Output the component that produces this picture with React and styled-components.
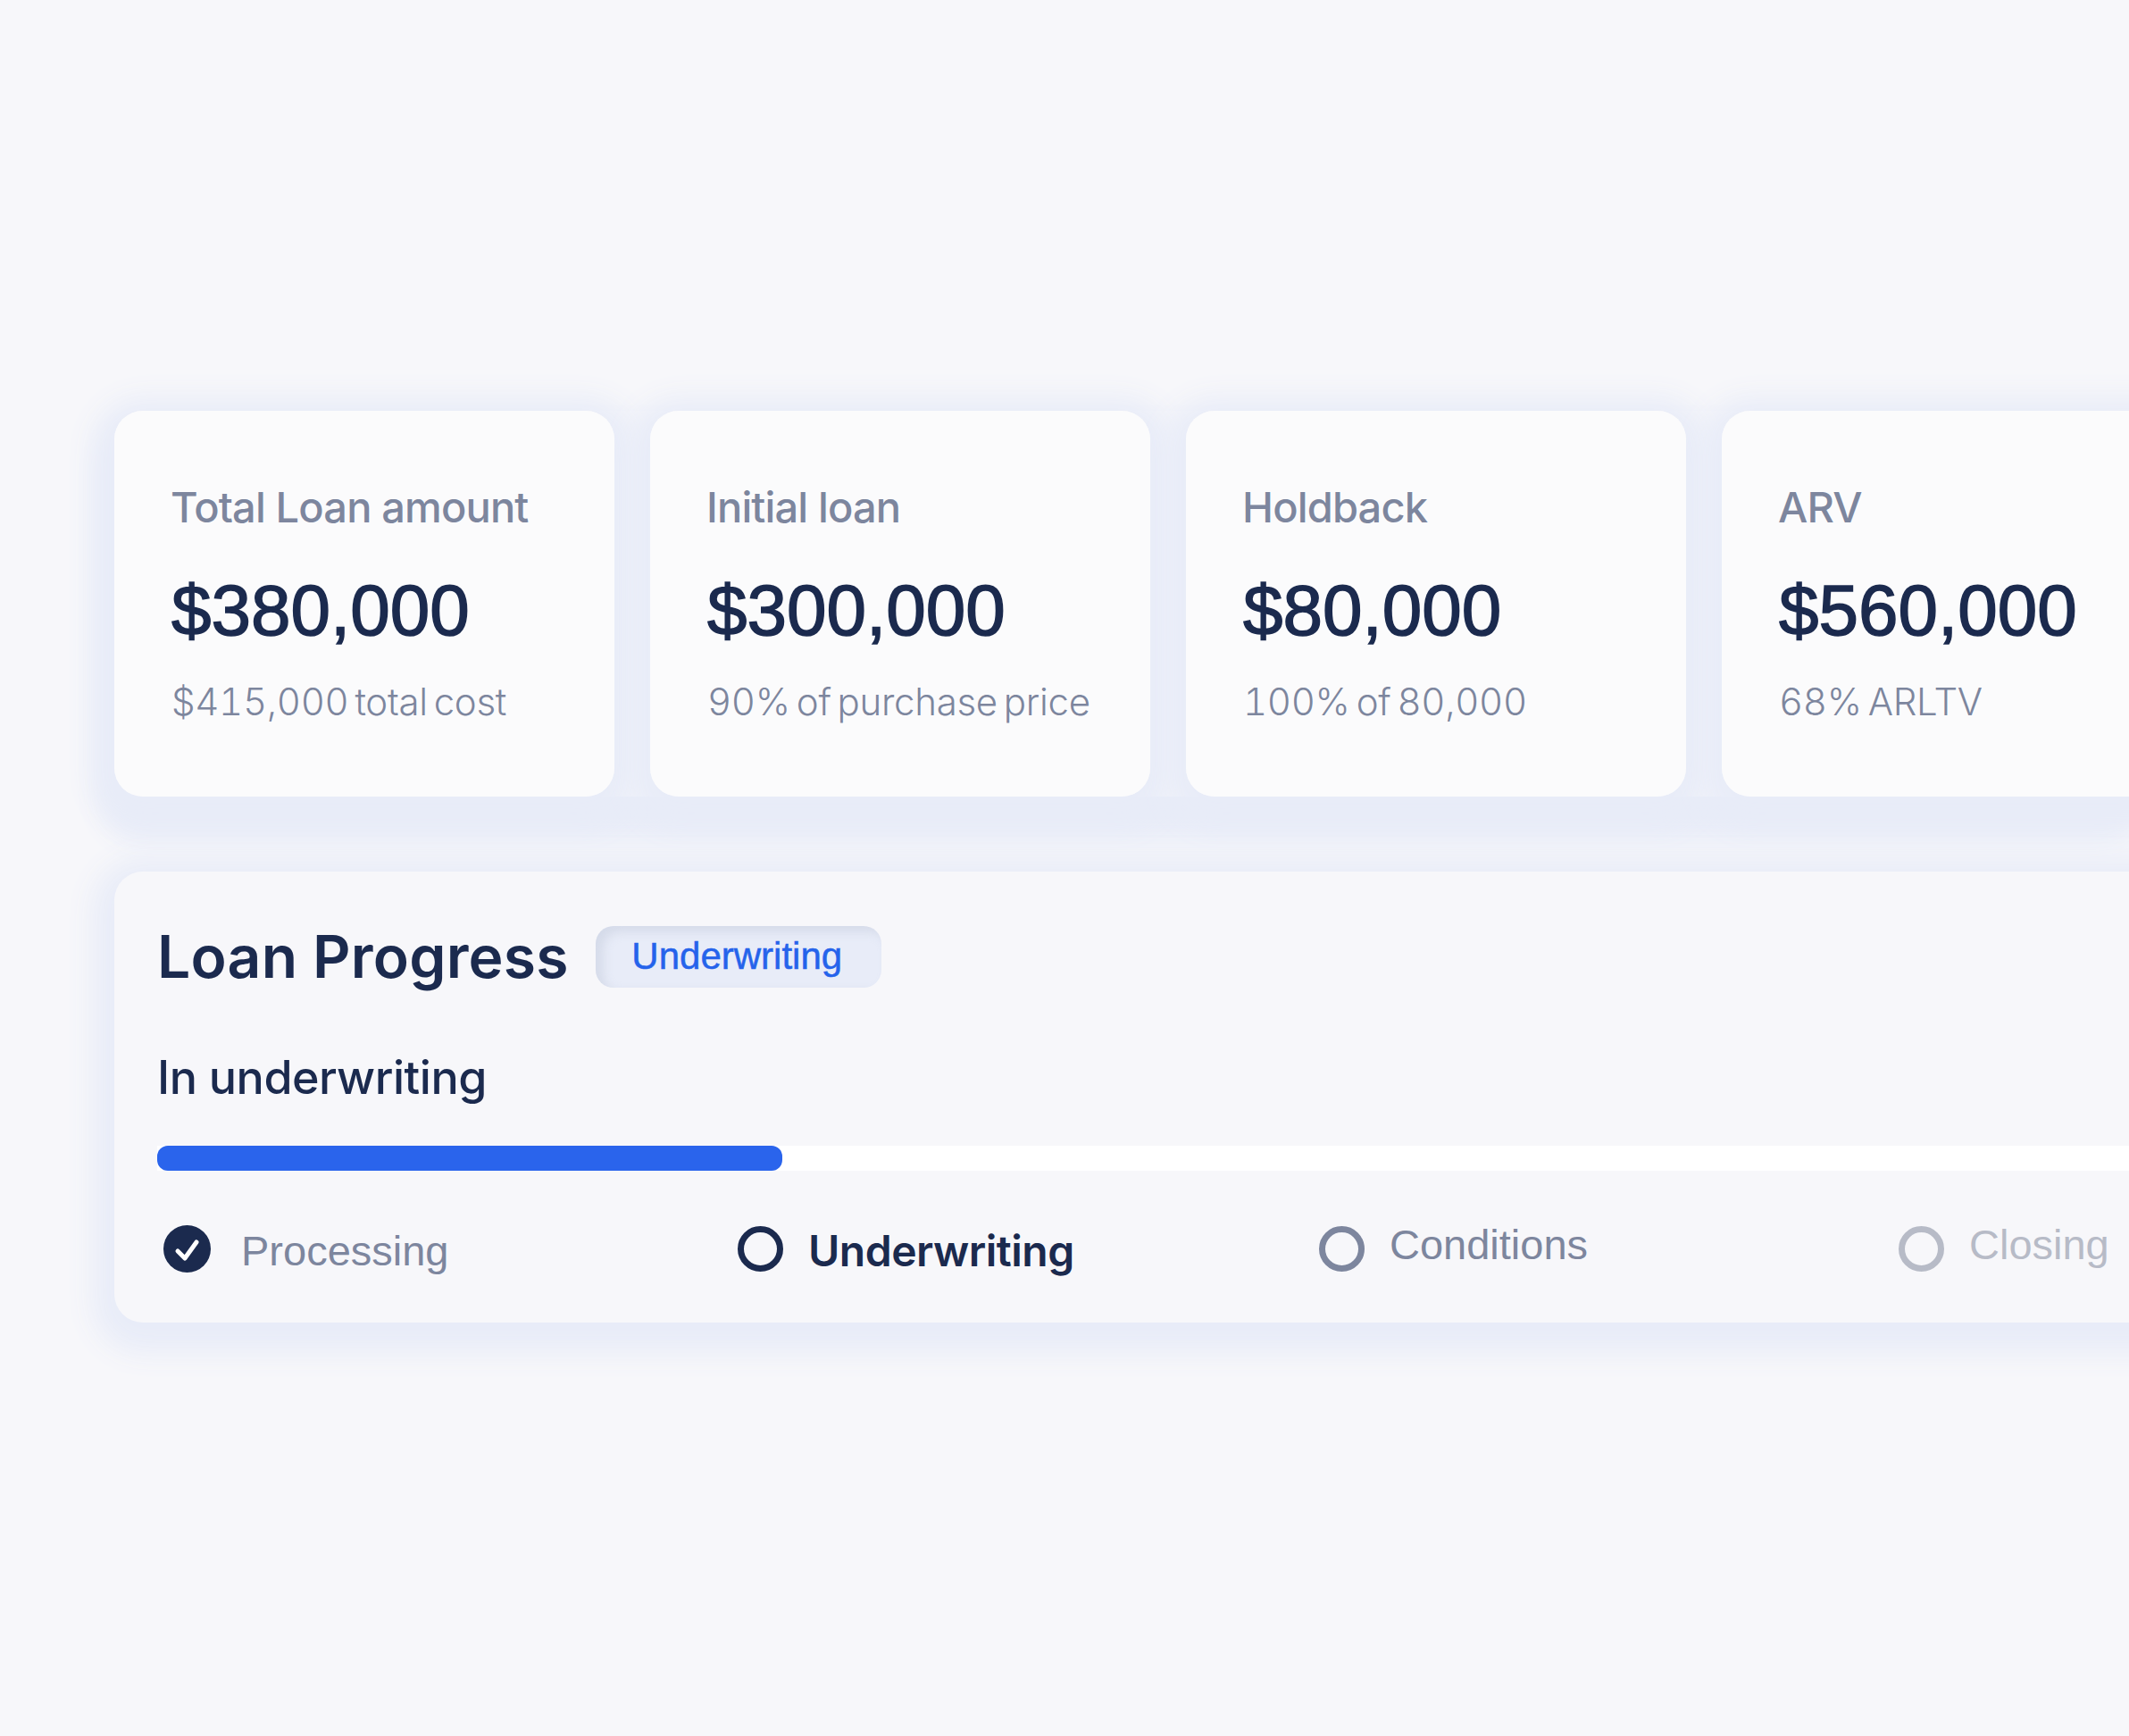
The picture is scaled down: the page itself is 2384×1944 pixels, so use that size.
import React from 'react'
import styled, { createGlobalStyle } from 'styled-components'

const GlobalStyle = createGlobalStyle`
  html, body {
    margin: 0;
    padding: 0;
    background: #f7f7fa;
  }
  body {
    width: 2384px;
    height: 1944px;
    overflow: hidden;
    font-family: Inter, "Liberation Sans", sans-serif;
  }
`

const stats = [
  { label: 'Total Loan amount', value: '$380,000', note: '$415,000 total cost' },
  { label: 'Initial loan', value: '$300,000', note: '90% of purchase price' },
  { label: 'Holdback', value: '$80,000', note: '100% of 80,000' },
  { label: 'ARV', value: '$560,000', note: '68% ARLTV' },
]

const steps = [
  { name: 'Processing', tone: 'muted', done: true },
  { name: 'Underwriting', tone: 'active' },
  { name: 'Conditions', tone: 'muted', raised: true },
  { name: 'Closing', tone: 'faint', raised: true },
]

const toneColor = {
  active: '#1b2a4e',
  muted: '#7d869e',
  faint: '#b7bbc7',
}

function App() {
  return (
    <Page>
      <GlobalStyle />
      <CardRow>
        {stats.map((stat) => (
          <Card key={stat.label}>
            <CardLabel>{stat.label}</CardLabel>
            <CardValue>{stat.value}</CardValue>
            <CardNote>{stat.note}</CardNote>
          </Card>
        ))}
      </CardRow>

      <Panel>
        <PanelHeader>
          <PanelTitle>Loan Progress</PanelTitle>
          <Badge>Underwriting</Badge>
        </PanelHeader>
        <Subtitle>In underwriting</Subtitle>
        <Track>
          <TrackFill />
        </Track>
        <Steps>
          {steps.map((step) => (
            <Step key={step.name}>
              {step.done ? (
                <DoneIcon viewBox="0 0 53 53">
                  <circle cx="26.5" cy="26.5" r="26.5" fill="#1b2a4e" />
                  <path d="M16 29l8 8 13-18" fill="none" stroke="#fff" strokeWidth="5" strokeLinecap="round" strokeLinejoin="round" />
                </DoneIcon>
              ) : (
                <Ring $tone={step.tone} />
              )}
              <StepName $tone={step.tone} $raised={step.raised}>{step.name}</StepName>
            </Step>
          ))}
        </Steps>
      </Panel>
    </Page>
  )
}

export default App

const softShadow = '0 10px 32px 24px #e8ecf8'

const Page = styled.div`
  position: relative;
  z-index: 0;
  width: 2384px;
  height: 1944px;
  padding: 460px 0 0 128px;
  box-sizing: border-box;
  overflow: hidden;
  background: #f7f7fa;
`

const CardRow = styled.div`
  position: relative;
  display: flex;
  gap: 40px;

  /* one band under the whole row, fills the gap above the panel */
  &::before {
    content: '';
    position: absolute;
    inset: 0;
    z-index: -1;
    border-radius: 32px;
    box-shadow: 0 34px 30px 16px #e8ecf8;
  }
`

const Card = styled.div`
  position: relative;
  flex: 0 0 560px;
  height: 432px;
  box-sizing: border-box;
  padding: 80px 64px 0;
  border-radius: 32px;
  background: #fbfbfc;

  /* shadow sits behind every card so it doesn't tint the neighbour */
  &::before {
    content: '';
    position: absolute;
    inset: 0;
    z-index: -1;
    border-radius: inherit;
    box-shadow: ${softShadow};
  }
`

const CardLabel = styled.div`
  margin-left: -1px;
  font-size: 47px;
  line-height: 56px;
  font-weight: 500;
  letter-spacing: -0.85px;
  color: #7d869e;
  white-space: nowrap;
`

const CardValue = styled.div`
  margin-top: 40px;
  font-family: "Liberation Sans", Arial, sans-serif;
  font-size: 80px;
  line-height: 96px;
  font-weight: 400;
  -webkit-text-stroke: 1.5px #1b2a4e;
  color: #1b2a4e;
  white-space: nowrap;
`

const CardNote = styled.div`
  margin-top: 28px;
  font-size: 42px;
  line-height: 52px;
  font-weight: 300;
  font-feature-settings: "tnum";
  letter-spacing: -0.3px;
  word-spacing: -4px;
  color: #7d869e;
  white-space: nowrap;
`

const Panel = styled.div`
  width: 2400px;
  height: 505px;
  margin-top: 84px;
  box-sizing: border-box;
  padding: 60px 0 0 48px;
  border-radius: 32px;
  background: #f7f7fa;
  box-shadow: ${softShadow};
`

const PanelHeader = styled.div`
  display: flex;
  align-items: center;
  gap: 30px;
  height: 70px;
`

const PanelTitle = styled.h2`
  margin: 0;
  font-size: 66px;
  line-height: 70px;
  font-weight: 600;
  letter-spacing: 0.2px;
  color: #1b2a4e;
  white-space: nowrap;
`

const Badge = styled.span`
  display: flex;
  align-items: center;
  justify-content: center;
  width: 320px;
  height: 69px;
  padding-right: 3px;
  box-sizing: border-box;
  border-radius: 20px;
  background: #e8ecf8;
  box-shadow: inset 8px 6px 12px rgba(170, 178, 200, 0.3);
  font-family: "Liberation Sans", Arial, sans-serif;
  font-size: 42px;
  -webkit-text-stroke: 0.5px #2563eb;
  color: #2563eb;
`

const Subtitle = styled.div`
  margin-top: 69px;
  font-size: 52px;
  line-height: 64px;
  font-weight: 500;
  letter-spacing: -0.5px;
  color: #1b2a4e;
  white-space: nowrap;
`

const Track = styled.div`
  height: 28px;
  margin-top: 44px;
  background: #fff;
`

const TrackFill = styled.div`
  width: 700px;
  height: 100%;
  border-radius: 12px;
  background: #2a64ec;
`

const Steps = styled.div`
  display: grid;
  grid-template-columns: 643px 651px 649px auto;
  margin-top: 54px;
  padding-left: 7px;
`

const Step = styled.div`
  display: flex;
  align-items: center;
`

const DoneIcon = styled.svg`
  flex: none;
  width: 53px;
  height: 53px;
  margin-right: 34px;
  margin-bottom: 5px;
  display: block;
`

const Ring = styled.div`
  flex: none;
  width: 51px;
  height: 51px;
  margin-right: 28px;
  margin-bottom: 5px;
  box-sizing: border-box;
  border: 7px solid ${({ $tone }) => toneColor[$tone]};
  border-radius: 50%;
`

const StepName = styled.span`
  font-family: ${({ $tone }) => ($tone === 'active' ? 'Inter, sans-serif' : '"Liberation Sans", Arial, sans-serif')};
  font-size: ${({ $tone }) => ($tone === 'active' ? '48px' : '47px')};
  line-height: 58px;
  margin-bottom: ${({ $raised }) => ($raised ? '14px' : '0')};
  font-weight: ${({ $tone }) => ($tone === 'active' ? 600 : 400)};
  letter-spacing: ${({ $tone }) => ($tone === 'active' ? '-0.5px' : '0')};
  color: ${({ $tone }) => toneColor[$tone]};
  white-space: nowrap;
`
